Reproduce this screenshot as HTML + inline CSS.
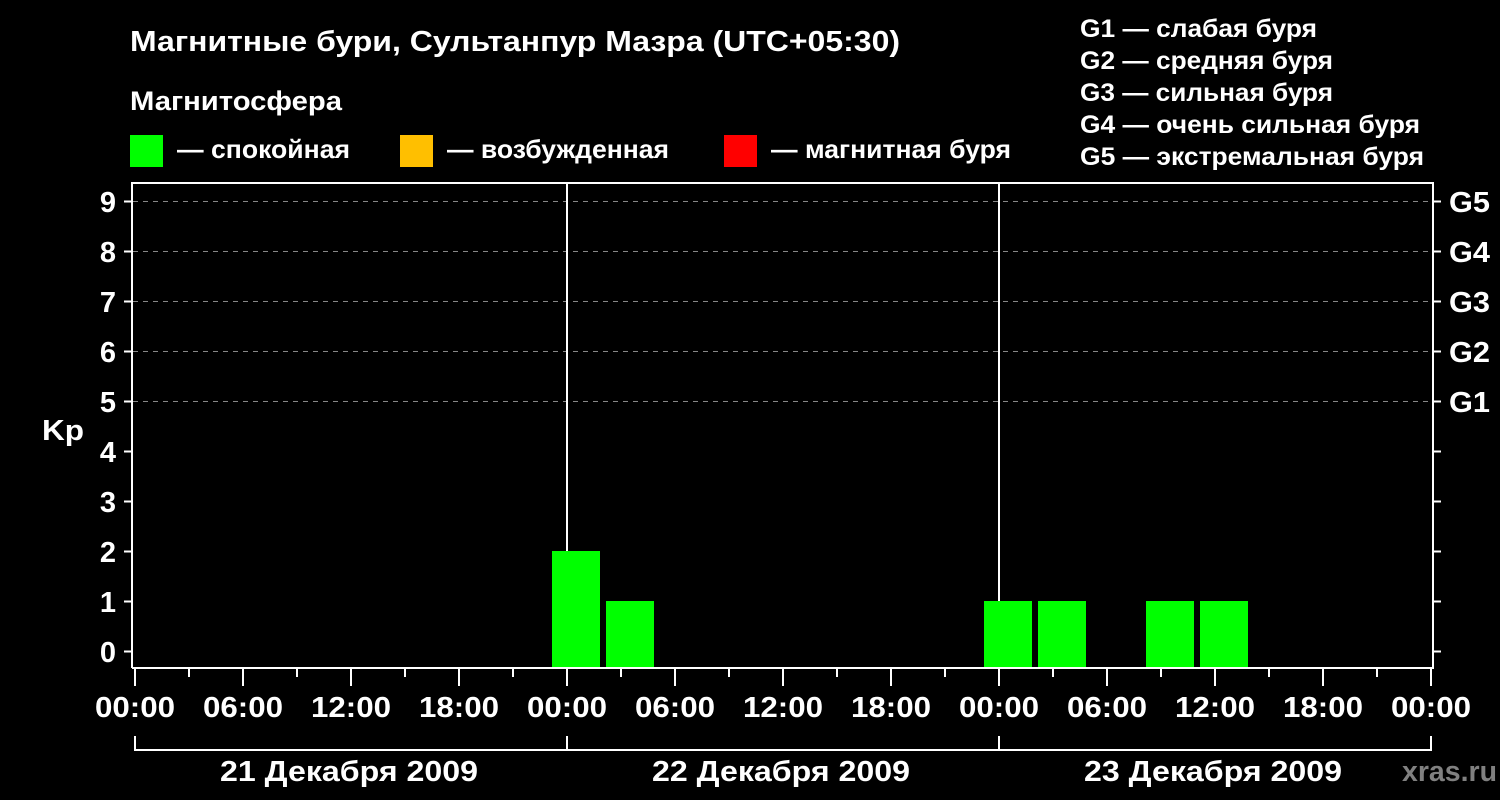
<!DOCTYPE html>
<html><head><meta charset="utf-8"><style>
html,body{margin:0;padding:0;background:#000;width:1500px;height:800px;overflow:hidden}
svg text{font-family:"Liberation Sans",sans-serif;font-weight:bold;fill:#fff}
</style></head><body>
<svg width="1500" height="800" xmlns="http://www.w3.org/2000/svg">
<rect width="1500" height="800" fill="#000"/>
<text x="130" y="51" font-size="29" textLength="770" lengthAdjust="spacingAndGlyphs">Магнитные бури, Сультанпур Мазра (UTC+05:30)</text>
<text x="130" y="110" font-size="27" textLength="212" lengthAdjust="spacingAndGlyphs">Магнитосфера</text>
<rect x="130" y="135" width="33" height="32" fill="#00ff00"/>
<text x="177" y="158" font-size="26" textLength="173" lengthAdjust="spacingAndGlyphs">— спокойная</text>
<rect x="400" y="135" width="33" height="32" fill="#ffbf00"/>
<text x="447" y="158" font-size="26" textLength="222" lengthAdjust="spacingAndGlyphs">— возбужденная</text>
<rect x="724" y="135" width="33" height="32" fill="#ff0000"/>
<text x="771" y="158" font-size="26" textLength="240" lengthAdjust="spacingAndGlyphs">— магнитная буря</text>
<g font-size="25">
<text x="1080" y="37" textLength="237" lengthAdjust="spacingAndGlyphs">G1 — слабая буря</text>
<text x="1080" y="69" textLength="253" lengthAdjust="spacingAndGlyphs">G2 — средняя буря</text>
<text x="1080" y="101" textLength="253" lengthAdjust="spacingAndGlyphs">G3 — сильная буря</text>
<text x="1080" y="133" textLength="340" lengthAdjust="spacingAndGlyphs">G4 — очень сильная буря</text>
<text x="1080" y="165" textLength="344" lengthAdjust="spacingAndGlyphs">G5 — экстремальная буря</text>
</g>
<g stroke="#888" stroke-width="1" stroke-dasharray="5,5">
<line x1="133" y1="201.5" x2="1432" y2="201.5"/>
<line x1="133" y1="251.5" x2="1432" y2="251.5"/>
<line x1="133" y1="301.5" x2="1432" y2="301.5"/>
<line x1="133" y1="351.5" x2="1432" y2="351.5"/>
<line x1="133" y1="401.5" x2="1432" y2="401.5"/>
</g>
<g fill="#00ff00">
<rect x="552" y="551" width="48" height="117"/>
<rect x="606" y="601" width="48" height="67"/>
<rect x="984" y="601" width="48" height="67"/>
<rect x="1038" y="601" width="48" height="67"/>
<rect x="1146" y="601" width="48" height="67"/>
<rect x="1200" y="601" width="48" height="67"/>
</g>
<g stroke="#fff" stroke-width="2" fill="none">
<path d="M132 668 V183 H1433 V668 H132"/>
<line x1="567" y1="183" x2="567" y2="551"/>
<line x1="999" y1="183" x2="999" y2="601"/>
<path d="M124 201.5H132M124 251.5H132M124 301.5H132M124 351.5H132M124 401.5H132M124 451.5H132M124 501.5H132M124 551.5H132M124 601.5H132M124 651.5H132"/>
<path d="M1433 201.5H1441M1433 251.5H1441M1433 301.5H1441M1433 351.5H1441M1433 401.5H1441M1433 451.5H1441M1433 501.5H1441M1433 551.5H1441M1433 601.5H1441M1433 651.5H1441"/>
<path d="M135 668V686M243 668V686M351 668V686M459 668V686M567 668V686M675 668V686M783 668V686M891 668V686M999 668V686M1107 668V686M1215 668V686M1323 668V686M1431 668V686"/>
<path d="M189 668V677M297 668V677M405 668V677M513 668V677M621 668V677M729 668V677M837 668V677M945 668V677M1053 668V677M1161 668V677M1269 668V677M1377 668V677"/>
<path d="M135 736V750H1431V736M567 736V750M999 736V750"/>
</g>
<g font-size="29" text-anchor="end">
<text x="116" y="212">9</text><text x="116" y="262">8</text><text x="116" y="312">7</text><text x="116" y="362">6</text><text x="116" y="412">5</text><text x="116" y="462">4</text><text x="116" y="512">3</text><text x="116" y="562">2</text><text x="116" y="612">1</text><text x="116" y="662">0</text>
</g>
<text x="42" y="440" font-size="29" textLength="42" lengthAdjust="spacingAndGlyphs">Kp</text>
<g font-size="29">
<text x="1449" y="212" textLength="41" lengthAdjust="spacingAndGlyphs">G5</text><text x="1449" y="262" textLength="41" lengthAdjust="spacingAndGlyphs">G4</text><text x="1449" y="312" textLength="41" lengthAdjust="spacingAndGlyphs">G3</text><text x="1449" y="362" textLength="41" lengthAdjust="spacingAndGlyphs">G2</text><text x="1449" y="412" textLength="41" lengthAdjust="spacingAndGlyphs">G1</text>
</g>
<g font-size="29">
<text x="95" y="717" textLength="80" lengthAdjust="spacingAndGlyphs">00:00</text>
<text x="203" y="717" textLength="80" lengthAdjust="spacingAndGlyphs">06:00</text>
<text x="311" y="717" textLength="80" lengthAdjust="spacingAndGlyphs">12:00</text>
<text x="419" y="717" textLength="80" lengthAdjust="spacingAndGlyphs">18:00</text>
<text x="527" y="717" textLength="80" lengthAdjust="spacingAndGlyphs">00:00</text>
<text x="635" y="717" textLength="80" lengthAdjust="spacingAndGlyphs">06:00</text>
<text x="743" y="717" textLength="80" lengthAdjust="spacingAndGlyphs">12:00</text>
<text x="851" y="717" textLength="80" lengthAdjust="spacingAndGlyphs">18:00</text>
<text x="959" y="717" textLength="80" lengthAdjust="spacingAndGlyphs">00:00</text>
<text x="1067" y="717" textLength="80" lengthAdjust="spacingAndGlyphs">06:00</text>
<text x="1175" y="717" textLength="80" lengthAdjust="spacingAndGlyphs">12:00</text>
<text x="1283" y="717" textLength="80" lengthAdjust="spacingAndGlyphs">18:00</text>
<text x="1391" y="717" textLength="80" lengthAdjust="spacingAndGlyphs">00:00</text>
<text x="220" y="781" textLength="258" lengthAdjust="spacingAndGlyphs">21 Декабря 2009</text>
<text x="652" y="781" textLength="258" lengthAdjust="spacingAndGlyphs">22 Декабря 2009</text>
<text x="1084" y="781" textLength="258" lengthAdjust="spacingAndGlyphs">23 Декабря 2009</text>
</g>
<text x="1402" y="781" font-size="29" textLength="95" lengthAdjust="spacingAndGlyphs" style="fill:#808080">xras.ru</text>
</svg>
</body></html>
